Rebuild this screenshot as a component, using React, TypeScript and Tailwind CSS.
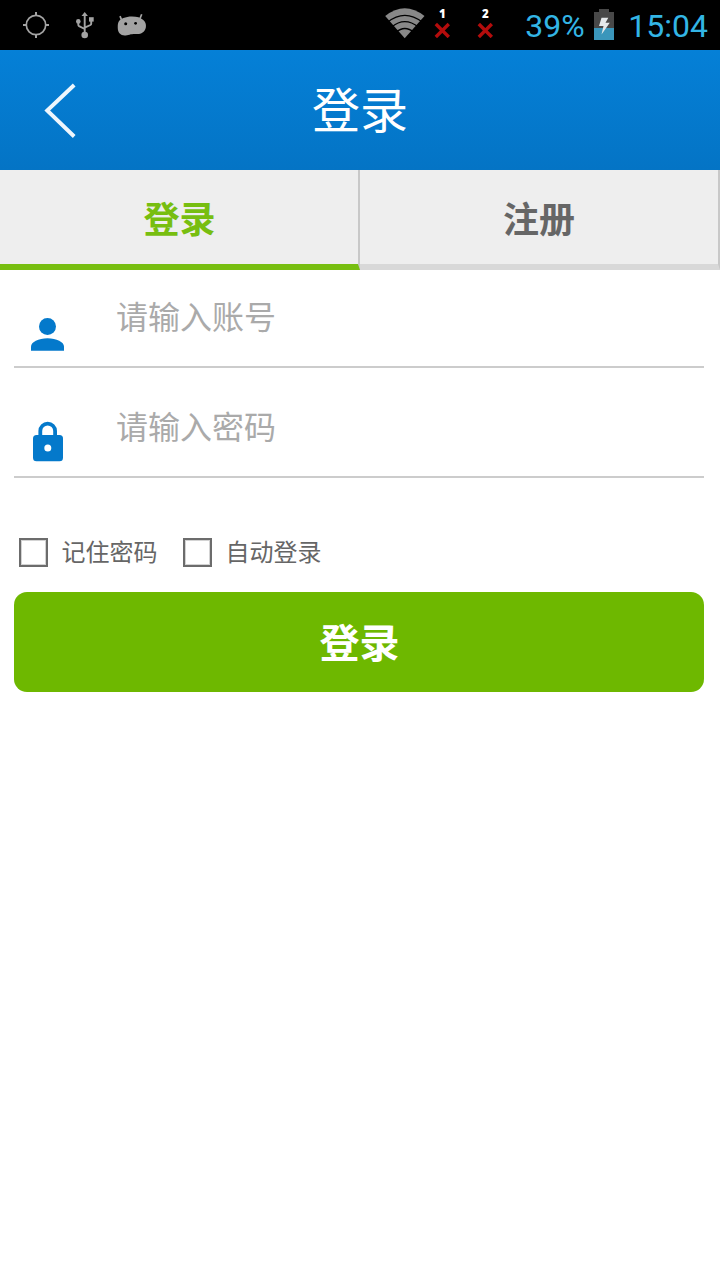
import { useState } from "react";
import type { ReactNode } from "react";

function StatusBar() {
  return (
    <div className="flex h-[50px] items-start bg-black font-[Roboto,sans-serif] text-[32px] text-[#33b5e5]">
      <svg className="ml-[22px] mt-[11px] h-7 w-7" viewBox="0 0 28 28" fill="none" stroke="#a3a3a3">
        <circle cx="14" cy="14" r="9.7" strokeWidth="1.7" />
        <path d="M14 1v4M14 23v4M1 14h4M23 14h4" strokeWidth="2" />
      </svg>
      <svg className="ml-[25px] mt-[11px] h-7 w-[20px]" viewBox="0 0 20 28" fill="none" stroke="#a3a3a3" strokeWidth="1.9">
        <path d="M9.7 24V4M3.3 11v2.800q0 .8.8 1.300l5.600 2.900M16.200 9v3.800q0 .8-.8 1.200L9.700 16.600" />
        <circle cx="9.700" cy="24" r="3.300" fill="#a3a3a3" stroke="none" />
        <path d="M6.500 5 9.700 1l3.200 4z" fill="#a3a3a3" stroke="none" />
        <circle cx="3.300" cy="10.400" r="2.300" fill="#a3a3a3" stroke="none" />
        <path d="M14 6.200h4.700v4.400H14z" fill="#a3a3a3" stroke="none" />
      </svg>
      <svg className="ml-[22px] mt-[13px] h-[24px] w-[30px]" viewBox="0 0 30 24">
        <path d="m3 3.200 2.500 6M24.700 1.200l-2.400 6" stroke="#a3a3a3" strokeWidth="1.700" />
        <path
          d="M1.500 9C3.200 6 8.500 3.600 15 3.600c5 0 8.700 1.100 11.300 3.500 2.200 2 2.900 4.300 2.600 6.900-.4 3.700-3.300 6.700-7 6.900-1.400.1-2.700.2-4.100.2-2.100 0-3.500.1-5.300.7-1.800.6-3.200.7-4.900.7C3.600 22.500.9 19.600.8 15.600.7 13 .7 10.700 1.500 9z"
          fill="#a3a3a3"
        />
        <circle cx="8.700" cy="10.800" r="1.500" />
        <circle cx="18.600" cy="10.300" r="1.400" />
      </svg>

      <svg className="ml-auto mt-[7px] h-8 w-10" viewBox="0 0 40 32">
        <path d="M19.700 31.200.2 9Q19.700-6.500 39.500 9z" fill="#888" />
        <path
          d="M2.500 15.300Q19.700 1.500 37.500 15.300M6.500 20.200Q19.700 9 33.500 20.200M11 25.300Q19.700 17.500 29 25.300"
          fill="none"
          stroke="#000"
          strokeWidth="1.400"
        />
      </svg>
      <SimMissing slot="1" className="ml-[9px]" />
      <SimMissing slot="2" className="ml-[27px]" />
      <span className="ml-[32px] w-[60px] leading-[52px]">39%</span>
      <svg className="ml-[9px] mt-[9px] h-[31px] w-5" viewBox="0 0 20 31">
        <path d="M0 3h5V0h10v3h5v16H0z" fill="#484848" />
        <path d="M0 19h20v12H0z" fill="#3a96bb" />
        <path d="M7.500 8.800h6.800L11.500 13.800H15.800L7.500 25.500 9.500 17H5z" fill="#e4e8ea" />
      </svg>
      <span className="ml-[14px] mr-[12px] leading-[52px]">15:04</span>
    </div>
  );
}

function SimMissing({ slot, className }: { slot: string; className: string }) {
  return (
    <div className={`flex w-4 flex-col items-center pt-[7px] ${className}`}>
      <span className="font-['Open_Sans',sans-serif] text-[11.5px] font-extrabold leading-[13px] text-white">{slot}</span>
      <svg className="mt-[2px] h-4 w-4" viewBox="0 0 16 16">
        <path d="m1.800 2 13 13M14.800 2 1.800 15" stroke="#b30c0c" strokeWidth="3.400" />
      </svg>
    </div>
  );
}

function Field({ icon, type, placeholder }: { icon: ReactNode; type: string; placeholder: string }) {
  return (
    <label className="flex h-[110px] items-start border-b-2 border-[#cccccc]">
      <span className="flex h-full w-[67px] items-end justify-center">{icon}</span>
      <input
        type={type}
        placeholder={placeholder}
        className="ml-[35px] mt-[33px] h-[48px] w-[560px] bg-transparent text-[32px] leading-[48px] text-[#333] outline-none placeholder:text-[#aaaaaa]"
      />
    </label>
  );
}

function CheckOption({ label }: { label: string }) {
  const [checked, setChecked] = useState(false);
  return (
    <label className="flex items-center">
      <input
        type="checkbox"
        checked={checked}
        onChange={() => setChecked(!checked)}
        className="h-[29px] w-[29px] appearance-none border-2 border-[#6c6c6c] outline outline-[#6c6c6c]/30 -outline-offset-3 checked:bg-[#6eb800]"
      />
      <span className="-mt-[3px] ml-[14px] text-[24px] leading-9 text-[#666666]">{label}</span>
    </label>
  );
}

export default function App() {
  const [tab, setTab] = useState("login");

  return (
    <div className="h-[1280px] w-[720px] bg-white font-['Noto_Sans_CJK_SC',sans-serif]">
      <StatusBar />

      <header className="grid h-[120px] grid-cols-[120px_1fr_120px] bg-linear-to-b from-[#0580d7] to-[#0474c5]">
        <button className="flex items-center pl-[44px] pt-[2px]">
          <svg className="h-[56px] w-[34px]" viewBox="0 0 34 56" fill="none">
            <path d="M30.200 2 3.200 27.500 30.200 53.500" stroke="#eef6fd" strokeWidth="3.900" />
          </svg>
        </button>
        <h1 className="text-center text-[48px] leading-[114px] text-white">登录</h1>
      </header>

      <nav className="grid h-[100px] grid-cols-2 text-[36px] font-bold">
        <button
          onClick={() => setTab("login")}
          className={
            tab === "login"
              ? "border-r-2 border-b-6 border-r-[#c8c8c8] border-b-[#77be10] bg-[#eeeeee] pl-px text-[#77be10]"
              : "border-r-2 border-b-6 border-r-[#c8c8c8] border-b-[#d8d8d8] bg-[#eeeeee] pl-px text-[#666666]"
          }
        >
          登录
        </button>
        <button
          onClick={() => setTab("register")}
          className={
            tab === "register"
              ? "border-r-2 border-b-6 border-r-[#c8c8c8] border-b-[#77be10] bg-[#eeeeee] text-[#77be10]"
              : "border-r-2 border-b-6 border-r-[#c8c8c8] border-b-[#d8d8d8] bg-[#eeeeee] text-[#666666]"
          }
        >
          注册
        </button>
      </nav>

      <form className="ml-[14px] w-[690px]" onSubmit={(e) => e.preventDefault()}>
        <div className="-mt-[12px]">
          <Field
            type="text"
            placeholder="请输入账号"
            icon={
              <svg className="mb-[15px] h-[34px] w-[34px]" viewBox="0 0 34 34" fill="#0479cb">
                <circle cx="16.500" cy="9.500" r="8.500" />
                <path d="M0 33.700v-4C0 25 7.500 21.300 16.500 21.300S33 25 33 29.700v4z" />
              </svg>
            }
          />
          <Field
            type="password"
            placeholder="请输入密码"
            icon={
              <svg className="mb-[14px] h-[42px] w-[32px]" viewBox="0 0 32 42">
                <path d="M8.300 17v-6a7.400 7.400 0 0 1 14.800 0v6" fill="none" stroke="#0479cb" strokeWidth="3.800" />
                <rect x="1" y="15" width="30" height="26.300" rx="3.500" fill="#0479cb" />
                <circle cx="15.800" cy="28" r="3.500" fill="#fff" />
              </svg>
            }
          />
        </div>
        <div className="flex h-[114px] items-start gap-[25px] pl-[4.5px] pt-[58px]">
          <CheckOption label="记住密码" />
          <CheckOption label="自动登录" />
        </div>
        <button className="h-[100px] w-full rounded-[13px] bg-[#6eb800] pb-[3px] pl-px text-[40px] font-bold text-white">
          登录
        </button>
      </form>
    </div>
  );
}
